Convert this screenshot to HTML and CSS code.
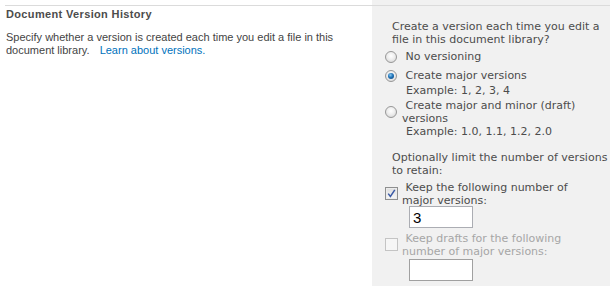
FILE: index.html
```html
<!DOCTYPE html>
<html lang="en">
<head>
    <meta charset="UTF-8">
    <title>Versioning Settings</title>
    <link rel="stylesheet" href="styles.css">
</head>
<body>
    <div class="section">
        <div class="section-info">
            <h3 class="section-title">Document Version History</h3>
            <p class="section-desc"><span>Specify whether a version is created each time you edit a file in this</span> <span>document library.</span> <a href="#" class="link">Learn about versions.</a></p>
        </div>
        <div class="section-body">
            <div class="question">Create a version each time you edit a file in this document library?</div>

            <div class="option first">
                <span class="radio"></span>
                <div class="label">&nbsp;No versioning</div>
            </div>
            <div class="option second">
                <span class="radio checked"></span>
                <div class="label">&nbsp;Create major versions</div>
            </div>
            <div class="example">Example: 1, 2, 3, 4</div>
            <div class="option">
                <span class="radio"></span>
                <div class="label">&nbsp;Create major and minor (draft) versions</div>
            </div>
            <div class="example tight">Example: 1.0, 1.1, 1.2, 2.0</div>

            <div class="question limit">Optionally limit the number of versions to retain:</div>

            <div class="option first">
                <span class="check checked">
                    <svg width="9" height="9" viewBox="0 0 9 9"><path d="M1.2 4.6 L3.4 7.4 L7.8 0.8" fill="none" stroke="#3b5aa6" stroke-width="1.5"/></svg>
                </span>
                <div class="label">&nbsp;Keep the following number of major versions:</div>
            </div>
            <input class="num" type="text" value="3">

            <div class="option disabled">
                <span class="check"></span>
                <div class="label">&nbsp;Keep drafts for the following number of major versions:</div>
            </div>
            <input class="num last" type="text" disabled>
        </div>
    </div>
</body>
</html>
```

FILE: styles.css
```css
body {
    margin: 0;
    background-color: #ffffff;
}

.section {
    display: flex;
    height: 286px;
}

.section-info {
    width: 367px;
    box-sizing: border-box;
    margin: 5px 0 0 5px;
    padding: 2px 10px 0 1px;
    border-top: 1px solid #dbdbdb;
    font-family: "Liberation Sans", Arial, sans-serif;
    font-size: 11px;
    color: #444444;
}

.section-title {
    margin: 0;
    font-size: 11px;
    line-height: 13px;
    font-weight: bold;
    letter-spacing: 0.35px;
    color: #4c4c4c;
}

.section-desc {
    margin: 10px 0 0 0;
    line-height: 13px;
}

.link {
    margin-left: 7px;
    color: #0072bc;
    text-decoration: none;
}

.section-body {
    flex: 1;
    background-color: #f1f1f1;
    padding: 0 0 0 13px;
    font-family: "DejaVu Sans", Verdana, sans-serif;
    font-size: 11px;
    line-height: 13px;
    color: #4c4c4c;
}

.section-body::before {
    content: "";
    display: block;
    height: 5px;
    border-bottom: 1px solid #dbdbdb;
    margin-left: -13px;
}

.question {
    margin: 14px 0 0 7px;
}

.question.limit {
    margin-top: 13px;
}

.option {
    display: grid;
    grid-template-columns: 17px 1fr;
    align-items: center;
    margin-top: 4px;
}

.option.second {
    margin-top: 6px;
}

.example + .option {
    margin-top: 2px;
}

.option.disabled {
    color: #a6a6a6;
}

.label {
    padding-right: 12px;
}

.example {
    margin: 2px 0 0 21px;
}

.example.tight {
    margin-top: 0;
}

.radio {
    width: 12px;
    height: 12px;
    border-radius: 50%;
    box-sizing: border-box;
    border: 1px solid #979797;
    background: radial-gradient(circle at 50% 40%, #ffffff 0, #eeeeee 45%, #cfcfcf 100%);
    position: relative;
}

.radio.checked::after {
    content: "";
    position: absolute;
    left: 2px;
    top: 2px;
    width: 6px;
    height: 6px;
    border-radius: 50%;
    background: radial-gradient(circle at 40% 35%, #8ccaf2 0, #1f73b8 45%, #0d3f73 100%);
}

.check {
    width: 13px;
    height: 13px;
    box-sizing: border-box;
    margin-bottom: 2px;
    border: 1px solid #c4c4c4;
    background: #f6f6f6;
    display: flex;
    align-items: center;
    justify-content: center;
}

.check.checked {
    border-color: #8e8f8f;
    background: linear-gradient(#dedede, #f8f8f8);
    box-shadow: inset 0 0 0 1px #ececec;
}

.num {
    display: block;
    width: 64px;
    height: 22px;
    box-sizing: border-box;
    margin: -1px 0 0 24px;
    padding: 1px 3px;
    border: 1px solid #abadb3;
    background: #ffffff;
    font-family: "Liberation Sans", Arial, sans-serif;
    font-size: 15px;
    color: #000000;
}

.num.last {
    margin-top: 1px;
}

.num:disabled {
    border-color: #a0a0a0;
}
```
